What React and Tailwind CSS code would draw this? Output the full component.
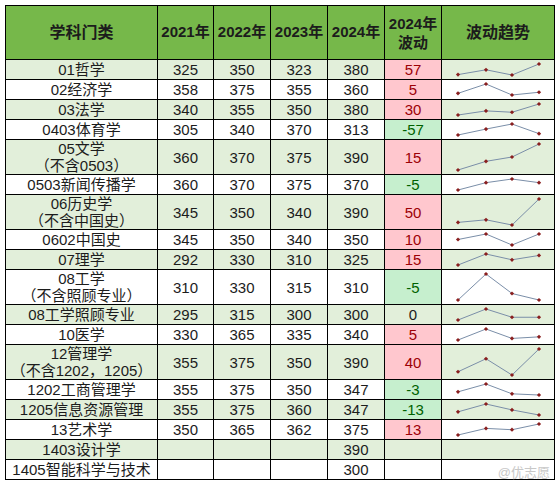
import React from "react";

const rows = [
  { name: ["01哲学"], v: [325, 350, 323, 380], d: 57 },
  { name: ["02经济学"], v: [358, 375, 355, 360], d: 5 },
  { name: ["03法学"], v: [340, 355, 350, 380], d: 30 },
  { name: ["0403体育学"], v: [305, 340, 370, 313], d: -57 },
  { name: ["05文学", "（不含0503）"], v: [360, 370, 375, 390], d: 15 },
  { name: ["0503新闻传播学"], v: [360, 370, 375, 370], d: -5 },
  { name: ["06历史学", "（不含中国史）"], v: [345, 350, 340, 390], d: 50 },
  { name: ["0602中国史"], v: [345, 350, 340, 350], d: 10 },
  { name: ["07理学"], v: [292, 330, 310, 325], d: 15 },
  { name: ["08工学", "（不含照顾专业）"], v: [310, 330, 315, 310], d: -5 },
  { name: ["08工学照顾专业"], v: [295, 315, 300, 300], d: 0 },
  { name: ["10医学"], v: [330, 365, 335, 340], d: 5 },
  { name: ["12管理学", "（不含1202，1205）"], v: [355, 375, 350, 390], d: 40 },
  { name: ["1202工商管理学"], v: [355, 375, 350, 347], d: -3 },
  { name: ["1205信息资源管理"], v: [355, 375, 360, 347], d: -13 },
  { name: ["13艺术学"], v: [350, 365, 362, 375], d: 13 },
  { name: ["1403设计学"], v: [null, null, null, 390], d: null },
  { name: ["1405智能科学与技术"], v: [null, null, null, 300], d: null },
];

function Spark({ v, h }) {
  if (v[0] == null) return null;
  const xs = [16, 44, 70, 97];
  const min = Math.min(...v);
  const max = Math.max(...v);
  const top = 4;
  const bot = h - 4;
  const pts = v.map((n, i) => [xs[i], max === min ? (top + bot) / 2 : bot - ((n - min) / (max - min)) * (bot - top)]);
  return (
    <svg width="112" height={h} className="block">
      <polyline points={pts.map((p) => p.join(",")).join(" ")} fill="none" stroke="#7a8ea8" strokeWidth="1" />
      {pts.map((p, i) => (
        <rect key={i} x={p[0] - 1.5} y={p[1] - 1.5} width="3" height="3" fill="#8a1f1f" transform={`rotate(45 ${p[0]} ${p[1]})`} />
      ))}
    </svg>
  );
}

export default function App() {
  return (
    <div className="relative w-[558px] h-[488px] bg-white pl-[5px] pt-[5px]" style={{ fontFamily: '"Liberation Sans", "Noto Sans CJK SC", sans-serif' }}>
      <table className="border-collapse text-[15px] text-[#1c1c1c] table-fixed w-[549px]">
        <colgroup>
          <col className="w-[152px]" />
          <col className="w-[56px]" />
          <col className="w-[57px]" />
          <col className="w-[57px]" />
          <col className="w-[57px]" />
          <col className="w-[57px]" />
          <col className="w-[113px]" />
        </colgroup>
        <thead>
          <tr className="h-[54px] bg-[#76b84a] font-bold text-[15px]">
            <th className="border border-black p-0 text-[16px]">学科门类</th>
            <th className="border border-black p-0">2021年</th>
            <th className="border border-black p-0">2022年</th>
            <th className="border border-black p-0">2023年</th>
            <th className="border border-black p-0">2024年</th>
            <th className="border border-black p-0 leading-[19px]">2024年<br />波动</th>
            <th className="border border-black p-0 text-[16px]">波动趋势</th>
          </tr>
        </thead>
        <tbody>
          {rows.map((r, i) => {
            const dbl = r.name.length > 1;
            const h = dbl ? 34 : 19;
            const bg = i % 2 === 0 ? "bg-[#e2efda]" : "bg-white";
            let dcls = "";
            if (r.d > 0) dcls = "bg-[#ffc7ce] text-[#9c0006]";
            else if (r.d < 0) dcls = "bg-[#c6efce] text-[#006100]";
            return (
              <tr key={i} className={`${bg} ${dbl ? "h-[35px]" : "h-[20px]"}`}>
                <td className="border border-black p-0 text-center leading-[17px] whitespace-nowrap">
                  {r.name.map((n, k) => (
                    <div key={k}>{n}</div>
                  ))}
                </td>
                {r.v.map((n, k) => (
                  <td key={k} className="border border-black p-0 text-center leading-[17px]">
                    {n ?? ""}
                  </td>
                ))}
                <td className={`border border-black p-0 text-center leading-[17px] ${dcls}`}>{r.d ?? ""}</td>
                <td className="border border-black p-0 align-top">
                  <Spark v={r.v} h={h} />
                </td>
              </tr>
            );
          })}
        </tbody>
      </table>
      <div className="absolute right-[8px] bottom-[6px] text-[13px] text-[#c8c8c8]">@优志愿</div>
    </div>
  );
}
